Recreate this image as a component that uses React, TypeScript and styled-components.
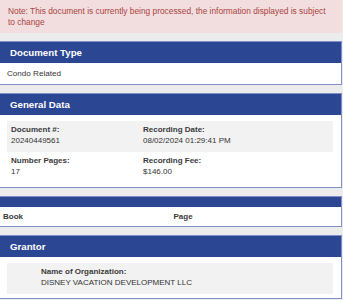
import styled, { createGlobalStyle } from "styled-components";

const Global = createGlobalStyle`
  body {
    margin: 0;
    background: #ececec;
    font-family: "Liberation Sans", Arial, sans-serif;
    color: #333;
  }
`;

const Page = styled.div`
  display: flex;
  flex-direction: column;
  gap: 8px;
  padding-right: 1px;
`;

const Note = styled.div`
  background: #f2dede;
  color: #a94442;
  font-size: 8.35px;
  line-height: 11px;
  padding: 6px 8px 5px 8px;
`;

const Panel = styled.section`
  background: #fff;
  border: 1px solid #7f8fc8;
  border-left: none;
`;

const Header = styled.div<{ thin?: boolean }>`
  background: #2b4692;
  color: #fff;
  font-weight: bold;
  font-size: 9.7px;
  height: ${(p) => (p.thin ? "10px" : "21px")};
  line-height: 21px;
  padding: 0 10px;
`;

const Body = styled.div`
  padding: 6px 8px 4px 7px;
`;

const Plain = styled.div`
  font-size: 8.1px;
  line-height: 11px;
  padding: 5px 7px;
`;

const Row = styled.div<{ shade?: boolean; indent?: number }>`
  display: grid;
  grid-template-columns: ${(p) => (p.indent ? "1fr" : "132px 1fr")};
  background: ${(p) => (p.shade ? "#f2f2f2" : "transparent")};
  padding: 4px 4px 6px ${(p) => 4 + (p.indent ?? 0)}px;
  font-size: 8px;
  line-height: 10.5px;
`;

const Field = styled.div`
  display: flex;
  flex-direction: column;
`;

const Label = styled.span`
  font-weight: bold;
  color: #3a3a3a;
`;

const Value = styled.span`
  color: #333;
`;

const Table = styled.div`
  display: grid;
  grid-template-columns: 1fr 1fr;
  font-size: 8px;
  font-weight: bold;
  line-height: 11px;
  color: #3a3a3a;
`;

const Cell = styled.div`
  padding: 4px 3px;
`;

export default function App() {
  return (
    <>
      <Global />
      <Page>
        <Note>
          Note: This document is currently being processed, the information displayed is subject
          to change
        </Note>

        <Panel>
          <Header>Document Type</Header>
          <Plain>Condo Related</Plain>
        </Panel>

        <Panel>
          <Header>General Data</Header>
          <Body>
            <Row shade>
              <Field>
                <Label>Document #:</Label>
                <Value>20240449561</Value>
              </Field>
              <Field>
                <Label>Recording Date:</Label>
                <Value>08/02/2024 01:29:41 PM</Value>
              </Field>
            </Row>
            <Row>
              <Field>
                <Label>Number Pages:</Label>
                <Value>17</Value>
              </Field>
              <Field>
                <Label>Recording Fee:</Label>
                <Value>$146.00</Value>
              </Field>
            </Row>
          </Body>
        </Panel>

        <Panel>
          <Header thin />
          <Table>
            <Cell>Book</Cell>
            <Cell>Page</Cell>
          </Table>
        </Panel>

        <Panel>
          <Header>Grantor</Header>
          <Body>
            <Row shade indent={30}>
              <Field>
                <Label>Name of Organization:</Label>
                <Value>DISNEY VACATION DEVELOPMENT LLC</Value>
              </Field>
            </Row>
          </Body>
        </Panel>
      </Page>
    </>
  );
}
